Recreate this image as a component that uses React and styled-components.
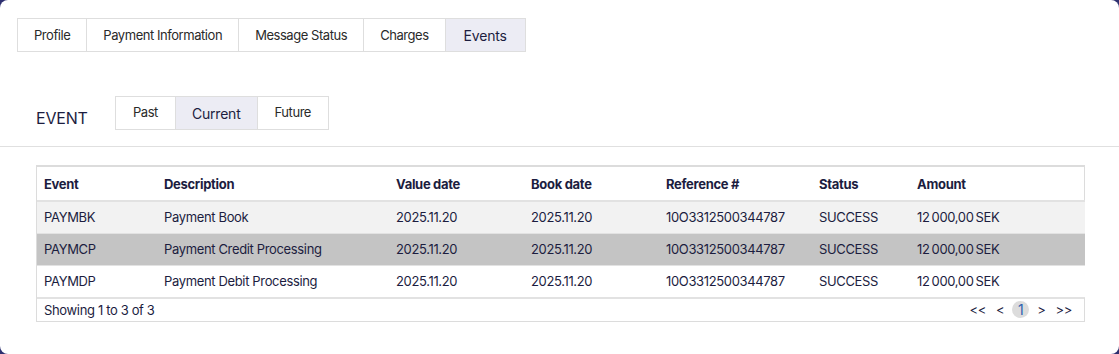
import React from 'react';
import styled, { createGlobalStyle } from 'styled-components';

const GlobalStyle = createGlobalStyle`
  html, body {
    margin: 0;
    padding: 0;
    background: #2e3070;
  }
  * {
    box-sizing: border-box;
  }
`;

const mainTabs = ['Profile', 'Payment Information', 'Message Status', 'Charges', 'Events'];
const eventTabs = ['Past', 'Current', 'Future'];

const columns = [
  { key: 'event', label: 'Event', width: 120 },
  { key: 'description', label: 'Description', width: 232 },
  { key: 'valueDate', label: 'Value date', width: 135 },
  { key: 'bookDate', label: 'Book date', width: 135 },
  { key: 'reference', label: 'Reference #', width: 153 },
  { key: 'status', label: 'Status', width: 98 },
  { key: 'amount', label: 'Amount', width: 175 },
];

const rowTones = {
  striped: '#f2f2f2',
  selected: '#c4c4c4',
  plain: '#ffffff',
};

const rows = [
  {
    event: 'PAYMBK',
    description: 'Payment Book',
    valueDate: '2025.11.20',
    bookDate: '2025.11.20',
    reference: '10O3312500344787',
    status: 'SUCCESS',
    amount: '12\u202f000,00\u202fSEK',
    tone: 'striped',
  },
  {
    event: 'PAYMCP',
    description: 'Payment Credit Processing',
    valueDate: '2025.11.20',
    bookDate: '2025.11.20',
    reference: '10O3312500344787',
    status: 'SUCCESS',
    amount: '12\u202f000,00\u202fSEK',
    tone: 'selected',
  },
  {
    event: 'PAYMDP',
    description: 'Payment Debit Processing',
    valueDate: '2025.11.20',
    bookDate: '2025.11.20',
    reference: '10O3312500344787',
    status: 'SUCCESS',
    amount: '12\u202f000,00\u202fSEK',
    tone: 'plain',
  },
];

function App() {
  const activeTab = 'Events';
  const activeEventTab = 'Current';

  return (
    <>
      <GlobalStyle />
      <Card>
        <TabBar>
          {mainTabs.map((tab) => (
            <Tab key={tab} active={tab === activeTab}>
              {tab}
            </Tab>
          ))}
        </TabBar>

        <EventHeader>
          <EventTitle>EVENT</EventTitle>
          <SubTabBar>
            {eventTabs.map((tab) => (
              <SubTab key={tab} active={tab === activeEventTab}>
                {tab}
              </SubTab>
            ))}
          </SubTabBar>
        </EventHeader>

        <Divider />

        <TableWrap>
          <Table>
            <colgroup>
              {columns.map((col) => (
                <Col key={col.key} w={col.width} />
              ))}
            </colgroup>
            <thead>
              <tr>
                {columns.map((col) => (
                  <HeadCell key={col.key}>{col.label}</HeadCell>
                ))}
              </tr>
            </thead>
            <tbody>
              {rows.map((row) => (
                <Row key={row.event} tone={row.tone}>
                  {columns.map((col) => (
                    <Cell key={col.key}>{row[col.key]}</Cell>
                  ))}
                </Row>
              ))}
            </tbody>
          </Table>
          <Footer>
            <span>Showing 1 to 3 of 3</span>
            <Pager>
              <PageLink>&lt;&lt;</PageLink>
              <PageLink>&lt;</PageLink>
              <PageNumber>1</PageNumber>
              <PageLink>&gt;</PageLink>
              <PageLink>&gt;&gt;</PageLink>
            </Pager>
          </Footer>
        </TableWrap>
      </Card>
    </>
  );
}

const Card = styled.div`
  height: 354px;
  background: #ffffff;
  border-radius: 8px;
  padding-top: 18px;
  font-family: Inter, 'Noto Sans', sans-serif;
  color: #1c1d3f;
`;

const TabBar = styled.div`
  display: flex;
  margin-left: 17px;
`;

const Tab = styled.div`
  height: 34px;
  padding: ${(p) => (p.active ? '0 18px' : '0 16px')};
  display: flex;
  align-items: center;
  border: 1px solid #dedede;
  margin-left: -1px;
  font-size: ${(p) => (p.active ? '14px' : '13px')};
  letter-spacing: ${(p) => (p.active ? '-0.2px' : '-0.45px')};
  color: ${(p) => (p.active ? '#1c1d3f' : '#2a2a2a')};
  background: ${(p) => (p.active ? '#ececf4' : '#ffffff')};
  &:first-child {
    margin-left: 0;
  }
`;

const EventHeader = styled.div`
  display: flex;
  align-items: center;
  margin-top: 44px;
  padding-left: 36px;
`;

const EventTitle = styled.div`
  font-size: 16px;
  color: #1c1d3f;
  width: 79px;
  padding-top: 10px;
  letter-spacing: -0.2px;
`;

const SubTabBar = styled.div`
  display: flex;
`;

const SubTab = styled(Tab)`
  padding: ${(p) => (p.active ? '0 16px' : '0 17px')};
  padding-bottom: ${(p) => (p.active ? '0' : '3px')};
`;

const Divider = styled.div`
  height: 1px;
  background: #e0e0e0;
  margin-top: 16px;
`;

const TableWrap = styled.div`
  margin: 18px 34px 0 36px;
  border: 1px solid #dcdcdc;
  border-top-width: 2px;
`;

const Table = styled.table`
  width: 100%;
  border-collapse: collapse;
  table-layout: fixed;
`;

const Col = styled.col`
  width: ${(p) => p.w}px;
`;

const HeadCell = styled.th`
  height: 34px;
  padding: 0 7px;
  text-align: left;
  font-size: 13px;
  font-weight: 700;
  letter-spacing: -0.3px;
  color: #1c1d3f;
  border-bottom: 2px solid #e2e2e2;
`;

const Row = styled.tr`
  background: ${(p) => rowTones[p.tone]};
  border-bottom: 1px solid #e2e2e2;
`;

const Cell = styled.td`
  height: 32px;
  padding: 0 7px;
  font-size: 13px;
  letter-spacing: -0.35px;
  color: #1c1d3f;
  white-space: nowrap;
`;

const Footer = styled.div`
  height: 23px;
  display: flex;
  align-items: center;
  justify-content: space-between;
  padding: 0 10px 0 7px;
  font-size: 13px;
  letter-spacing: -0.35px;
  color: #1c1d3f;
  border-top: 1px solid #e2e2e2;
`;

const Pager = styled.div`
  display: flex;
  align-items: center;
  gap: 6px;
  font-size: 13px;
`;

const PageLink = styled.span`
  color: #1c1d3f;
  padding: 0 2px;
`;

const PageNumber = styled.span`
  width: 17px;
  height: 17px;
  border-radius: 50%;
  background: #dcdcdc;
  display: flex;
  align-items: center;
  justify-content: center;
  color: #2f5fb0;
  font-size: 14px;
`;

export default App;
